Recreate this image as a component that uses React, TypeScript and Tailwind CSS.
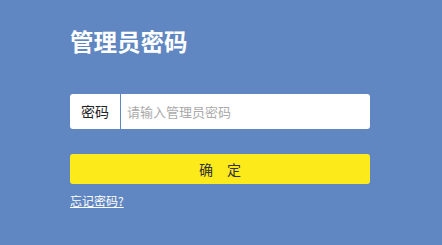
export default function App() {
  return (
    <div
      className="w-[442px] h-[245px] bg-[#6087c1] pl-[70px] pt-[28px]"
      style={{ fontFamily: '"Noto Sans CJK SC", "Noto Sans", sans-serif' }}
    >
      <div className="w-[300px]">
        <h1 className="text-[23.5px] leading-[26px] font-bold text-white">管理员密码</h1>

        <div className="mt-[40px] h-[35px] flex items-stretch bg-white rounded-[3px] overflow-hidden">
          <div className="w-[51px] flex items-center justify-center text-[14px] text-[#222] border-r border-[#6087c1]">
            密码
          </div>
          <input
            type="password"
            placeholder="请输入管理员密码"
            className="flex-1 min-w-0 px-[6px] text-[13px] text-[#333] placeholder:text-[#aaa] outline-none"
          />
        </div>

        <button
          type="button"
          className="mt-[25px] w-full h-[30px] bg-[#fcea1b] rounded-[3px] text-[14px] text-[#333] flex items-center justify-center"
        >
          确　定
        </button>

        <a href="#" className="mt-[9px] inline-block text-[12px] leading-[16px] text-white underline">
          忘记密码?
        </a>
      </div>
    </div>
  )
}
